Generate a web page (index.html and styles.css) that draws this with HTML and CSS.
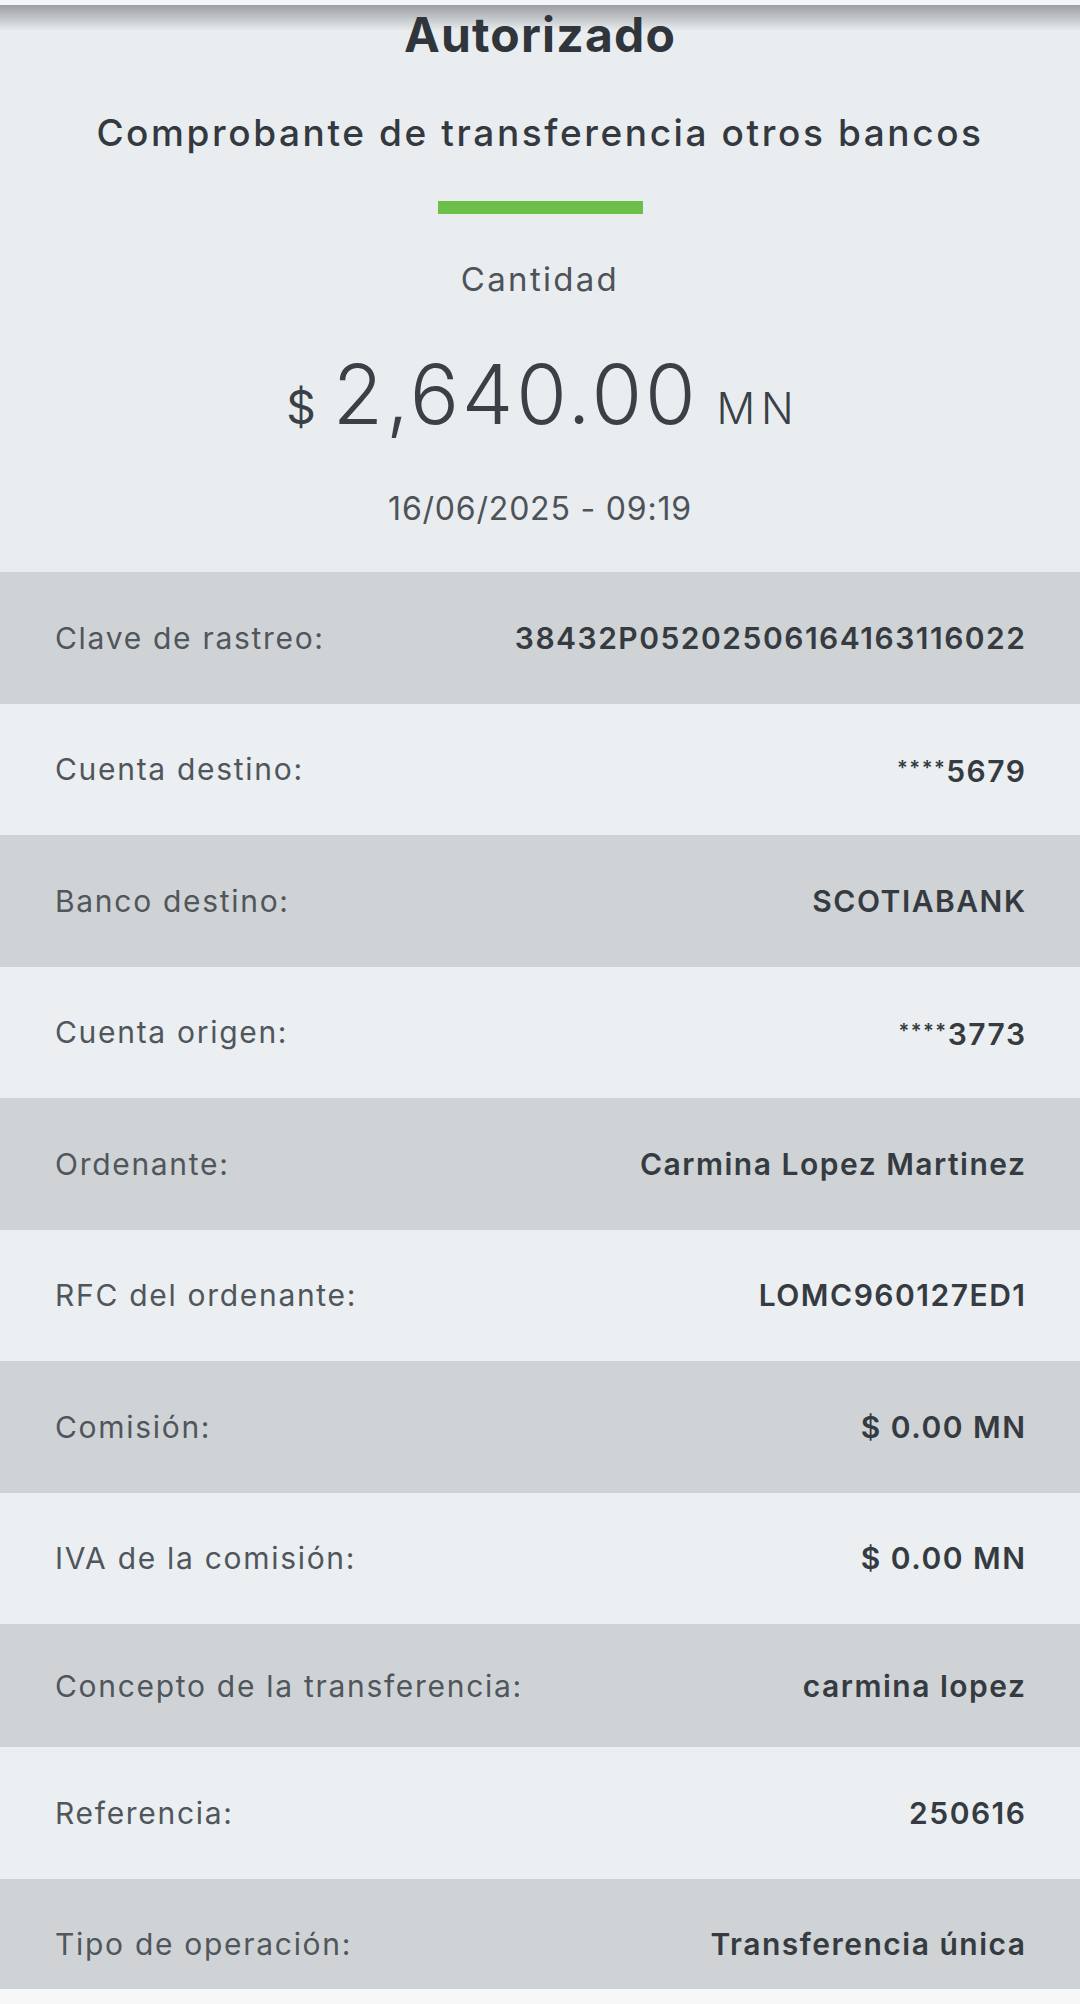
FILE: index.html
```html
<!DOCTYPE html>
<html>
<head>
<meta charset="utf-8">
<title>Comprobante de transferencia</title>
<link rel="stylesheet" href="styles.css">
</head>
<body>

<div class="top-strip"></div>

<div class="summary">
  <h1 class="status">Autorizado</h1>
  <h2 class="doc-title">Comprobante de transferencia otros bancos</h2>
  <div class="accent-bar"></div>
  <div class="amount-label">Cantidad</div>
  <div class="amount">
    <span class="currency">$</span>
    <span class="amount-value">2,640.00</span>
    <span class="amount-unit">MN</span>
  </div>
  <div class="timestamp">16/06/2025 - 09:19</div>
</div>

<div class="details">
  <div class="row shade">
    <span class="label">Clave de rastreo:</span>
    <span class="value">38432P05202506164163116022</span>
  </div>
  <div class="row">
    <span class="label">Cuenta destino:</span>
    <span class="value"><span class="mask">****</span>5679</span>
  </div>
  <div class="row shade">
    <span class="label">Banco destino:</span>
    <span class="value">SCOTIABANK</span>
  </div>
  <div class="row">
    <span class="label">Cuenta origen:</span>
    <span class="value"><span class="mask">****</span>3773</span>
  </div>
  <div class="row shade">
    <span class="label">Ordenante:</span>
    <span class="value">Carmina Lopez Martinez</span>
  </div>
  <div class="row">
    <span class="label">RFC del ordenante:</span>
    <span class="value">LOMC960127ED1</span>
  </div>
  <div class="row shade">
    <span class="label">Comisión:</span>
    <span class="value">$ 0.00 MN</span>
  </div>
  <div class="row">
    <span class="label">IVA de la comisión:</span>
    <span class="value">$ 0.00 MN</span>
  </div>
  <div class="row shade short">
    <span class="label">Concepto de la transferencia:</span>
    <span class="value">carmina lopez</span>
  </div>
  <div class="row">
    <span class="label">Referencia:</span>
    <span class="value">250616</span>
  </div>
  <div class="row shade">
    <span class="label">Tipo de operación:</span>
    <span class="value">Transferencia única</span>
  </div>
</div>

<div class="bottom-strip"></div>

</body>
</html>
```

FILE: styles.css
```css
body {
  margin: 0;
  padding: 0;
  font-family: "Inter", "Liberation Sans", sans-serif;
  background-color: #e9edf0;
  color: #353b41;
}

.top-strip {
  height: 5px;
  background-color: #f4f5f6;
}

.summary {
  display: flex;
  flex-direction: column;
  align-items: center;
  height: 567px;
  box-sizing: border-box;
  padding-top: 6px;
  background-color: #e9edf0;
  background-image: linear-gradient(rgba(90, 94, 98, 0.55), rgba(233, 237, 240, 0) 26px);
}

.status {
  margin: 0;
  font-size: 48px;
  line-height: 48px;
  font-weight: 700;
  letter-spacing: 1.2px;
  color: #2f353b;
}

.doc-title {
  margin: 56px 0 0;
  font-size: 37px;
  line-height: 36px;
  font-weight: 500;
  letter-spacing: 2.6px;
  color: #33393f;
}

.accent-bar {
  margin-top: 50px;
  width: 205px;
  height: 13px;
  background-color: #6cc04a;
}

.amount-label {
  margin-top: 49px;
  font-size: 33px;
  line-height: 32px;
  letter-spacing: 2.3px;
  color: #4d5359;
}

.amount {
  margin-top: 59px;
  display: flex;
  align-items: baseline;
  gap: 21px;
  color: #3a4046;
  line-height: 82px;
  height: 82px;
}

.currency {
  font-size: 46px;
  margin-right: -4px;
}

.amount-value {
  font-size: 82px;
  font-weight: 300;
  letter-spacing: 2.8px;
  margin-right: -3px;
}

.amount-unit {
  font-size: 43px;
  font-weight: 300;
  letter-spacing: 6px;
  margin-right: -6px;
}

.timestamp {
  margin-top: 57px;
  font-size: 32px;
  line-height: 32px;
  letter-spacing: 0.8px;
  color: #4d5359;
}

/* detail rows */
.details {
  height: 1417px;
  overflow: hidden;
}

.row {
  display: flex;
  justify-content: space-between;
  align-items: center;
  height: 131.5px;
  padding: 0 55px;
  background-color: #ebeff1;
  font-size: 30px;
  line-height: 30px;
}

.row.shade {
  background-color: #cfd3d5;
}

.row.short {
  height: 123px;
}

.row:last-child {
  height: 131px;
  flex-shrink: 0;
}

.label {
  color: #50565c;
  letter-spacing: 1.7px;
}

.value {
  font-weight: 600;
  color: #353b41;
  letter-spacing: 1.5px;
  margin-right: -1.5px;
}

/* masked account digits: small raised asterisks */
.value .mask {
  font-size: 20px;
  letter-spacing: 1.5px;
  vertical-align: 7px;
}

.bottom-strip {
  height: 15px;
  background-color: #f7f7f7;
}
```
